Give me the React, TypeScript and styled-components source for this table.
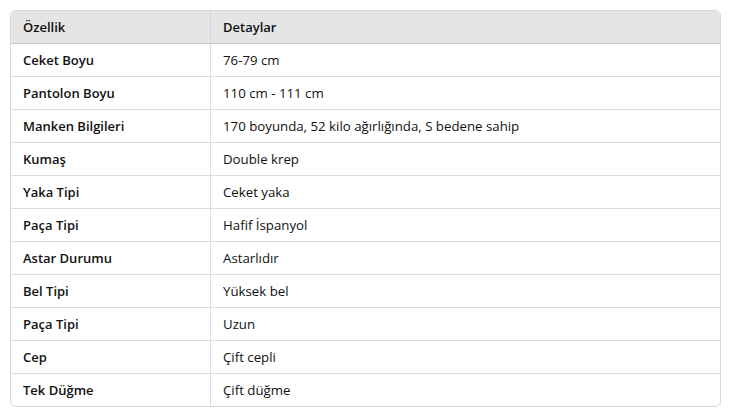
import React from 'react';
import styled, { createGlobalStyle } from 'styled-components';

const GlobalStyle = createGlobalStyle`
  body {
    margin: 0;
    background: #fff;
    font-family: "Open Sans", "Noto Sans", sans-serif;
    color: #111;
  }
`;

const Page = styled.div`
  padding: 10px 12px 10px 10px;
`;

const Frame = styled.div`
  width: 709px;
  border: 1px solid #d6d6d6;
  border-radius: 6px;
  overflow: hidden;
`;

const Table = styled.table`
  width: 100%;
  border-collapse: collapse;
  font-size: 13px;
`;

const HeadCell = styled.th`
  height: 32px;
  padding: 0 12px;
  text-align: left;
  font-weight: 600;
  background: #e5e5e5;
  border-bottom: 1px solid #c4c4c4;
  border-right: 1px solid #d6d6d6;
  &:last-child { border-right: none; }
`;

const Cell = styled.td<{ $bold?: boolean }>`
  height: 32px;
  padding: 0 12px;
  font-weight: ${p => (p.$bold ? 600 : 400)};
  font-size: ${p => (p.$bold ? '13px' : '13.25px')};
  width: ${p => (p.$bold ? '175px' : 'auto')};
  border-top: 1px solid #dcdcdc;
  border-right: 1px solid #dcdcdc;
  &:last-child { border-right: none; }
`;

const rows: [string, string][] = [
  ['Ceket Boyu', '76-79 cm'],
  ['Pantolon Boyu', '110 cm - 111 cm'],
  ['Manken Bilgileri', '170 boyunda, 52 kilo ağırlığında, S bedene sahip'],
  ['Kumaş', 'Double krep'],
  ['Yaka Tipi', 'Ceket yaka'],
  ['Paça Tipi', 'Hafif İspanyol'],
  ['Astar Durumu', 'Astarlıdır'],
  ['Bel Tipi', 'Yüksek bel'],
  ['Paça Tipi', 'Uzun'],
  ['Cep', 'Çift cepli'],
  ['Tek Düğme', 'Çift düğme'],
];

export default function App() {
  return (
    <Page>
      <GlobalStyle />
      <Frame>
        <Table>
          <thead>
            <tr>
              <HeadCell>Özellik</HeadCell>
              <HeadCell>Detaylar</HeadCell>
            </tr>
          </thead>
          <tbody>
            {rows.map(([k, v], i) => (
              <tr key={i}>
                <Cell $bold>{k}</Cell>
                <Cell>{v}</Cell>
              </tr>
            ))}
          </tbody>
        </Table>
      </Frame>
    </Page>
  );
}
